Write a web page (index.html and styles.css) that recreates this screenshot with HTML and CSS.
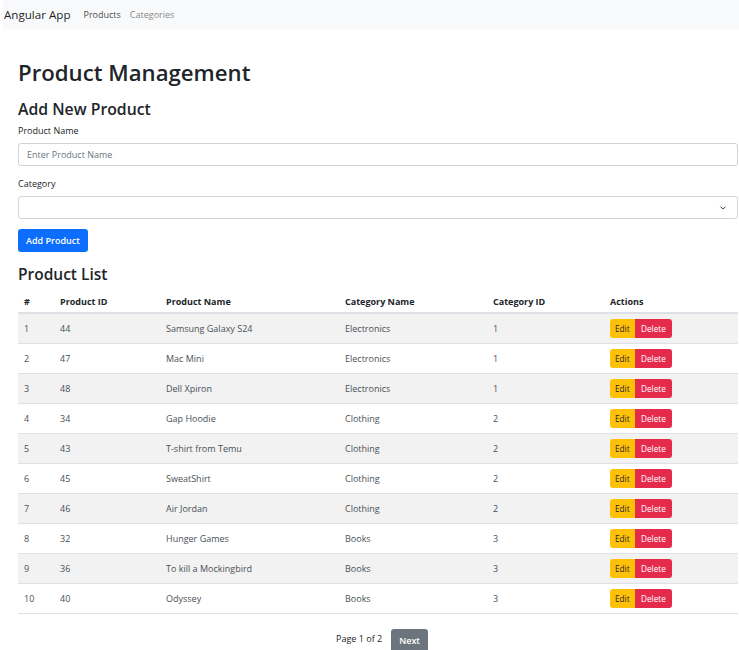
FILE: index.html
```html
<!DOCTYPE html>
<html lang="en">
<head>
<meta charset="utf-8">
<title>Angular App</title>
<link rel="stylesheet" href="styles.css">
</head>
<body>
<nav class="navbar">
  <span class="brand">Angular App</span>
  <a class="nav-link active">Products</a>
  <a class="nav-link">Categories</a>
</nav>
<main class="container">
  <h1 class="title">Product Management</h1>
  <h2 class="subtitle">Add New Product</h2>
  <form class="form">
    <label class="label">Product Name</label>
    <input class="control" type="text" placeholder="Enter Product Name">
    <label class="label label-gap">Category</label>
    <div class="select">
      <span class="chev"><svg width="8" height="6" viewBox="0 0 16 16"><path d="M2 5l6 6 6-6" fill="none" stroke="#343a40" stroke-width="2.5" stroke-linecap="round" stroke-linejoin="round"/></svg></span>
    </div>
    <button type="button" class="btn btn-primary">Add Product</button>
  </form>
  <h3 class="list-title">Product List</h3>
  <table class="table">
    <thead>
      <tr><th>#</th><th>Product ID</th><th>Product Name</th><th>Category Name</th><th>Category ID</th><th>Actions</th></tr>
    </thead>
    <tbody>
      <tr><td>1</td><td>44</td><td>Samsung Galaxy S24</td><td>Electronics</td><td>1</td><td><span class="acts"><button class="btn-sm edit">Edit</button><button class="btn-sm del">Delete</button></span></td></tr>
      <tr><td>2</td><td>47</td><td>Mac Mini</td><td>Electronics</td><td>1</td><td><span class="acts"><button class="btn-sm edit">Edit</button><button class="btn-sm del">Delete</button></span></td></tr>
      <tr><td>3</td><td>48</td><td>Dell Xpiron</td><td>Electronics</td><td>1</td><td><span class="acts"><button class="btn-sm edit">Edit</button><button class="btn-sm del">Delete</button></span></td></tr>
      <tr><td>4</td><td>34</td><td>Gap Hoodie</td><td>Clothing</td><td>2</td><td><span class="acts"><button class="btn-sm edit">Edit</button><button class="btn-sm del">Delete</button></span></td></tr>
      <tr><td>5</td><td>43</td><td>T-shirt from Temu</td><td>Clothing</td><td>2</td><td><span class="acts"><button class="btn-sm edit">Edit</button><button class="btn-sm del">Delete</button></span></td></tr>
      <tr><td>6</td><td>45</td><td>SweatShirt</td><td>Clothing</td><td>2</td><td><span class="acts"><button class="btn-sm edit">Edit</button><button class="btn-sm del">Delete</button></span></td></tr>
      <tr><td>7</td><td>46</td><td>Air Jordan</td><td>Clothing</td><td>2</td><td><span class="acts"><button class="btn-sm edit">Edit</button><button class="btn-sm del">Delete</button></span></td></tr>
      <tr><td>8</td><td>32</td><td>Hunger Games</td><td>Books</td><td>3</td><td><span class="acts"><button class="btn-sm edit">Edit</button><button class="btn-sm del">Delete</button></span></td></tr>
      <tr><td>9</td><td>36</td><td>To kill a Mockingbird</td><td>Books</td><td>3</td><td><span class="acts"><button class="btn-sm edit">Edit</button><button class="btn-sm del">Delete</button></span></td></tr>
      <tr><td>10</td><td>40</td><td>Odyssey</td><td>Books</td><td>3</td><td><span class="acts"><button class="btn-sm edit">Edit</button><button class="btn-sm del">Delete</button></span></td></tr>
    </tbody>
  </table>
  <div class="pager">
    <span class="page-info">Page 1 of 2</span>
    <button class="btn btn-secondary">Next</button>
  </div>
</main>
</body>
</html>
```
FILE: styles.css
```css
* { box-sizing: border-box; }
html, body { margin: 0; padding: 0; }
body {
  font-family: "Open Sans", "Noto Sans", sans-serif;
  font-size: 9.6px;
  color: #212529;
  background: #fff;
  overflow: hidden;
}
.navbar {
  margin-left: 3px;
  height: 29px;
  background: #f8f9fa;
  display: flex;
  align-items: center;
  padding-left: 1px;
}
.brand {
  font-size: 11.6px;
  color: rgba(0,0,0,.9);
  margin-right: 13px;
}
.nav-link {
  font-size: 9px;
  color: rgba(0,0,0,.5);
  margin-right: 9px;
}
.nav-link.active { color: rgba(0,0,0,.75); }
.container {
  padding: 0 1px 0 18px;
}
.title {
  font-size: 22.2px;
  font-weight: 600;
  margin: 29px 0 0;
  line-height: 29px;
}
.subtitle {
  font-size: 15.8px;
  font-weight: 600;
  margin: 12px 0 0;
  line-height: 21px;
}
.form { display: flex; flex-direction: column; align-items: flex-start; }
.label {
  margin-top: 4px;
  font-size: 9px;
  color: #212529;
  line-height: 14px;
}
.label-gap { margin-top: 11px; }
.control, .select {
  width: 100%;
  height: 23px;
  margin-top: 5px;
  border: 1px solid #ced4da;
  border-radius: 3px;
  font: inherit;
  font-size: 9px;
  padding: 0 8px;
  color: #212529;
  background: #fff;
}
.control::placeholder { color: #6c757d; }
.select { display: flex; align-items: center; justify-content: flex-end; }
.chev { display: flex; margin-right: 2px; }
.btn {
  font: inherit;
  font-size: 9px;
  font-weight: 600;
  border: 0;
  border-radius: 3px;
  color: #fff;
  padding: 0 8px;
  height: 23px;
  white-space: nowrap;
}
.btn-primary { background: #0d6efd; margin-top: 10px; padding: 0 8px; }
.btn-secondary { background: #6c757d; }
.list-title {
  font-size: 15.5px;
  font-weight: 600;
  margin: 13px 0 0;
  line-height: 19px;
}
.table {
  width: 100%;
  border-collapse: collapse;
  margin-top: 7px;
  font-size: 9px;
}
.table th {
  text-align: left;
  font-weight: 700;
  height: 22px;
  padding: 0 6px;
  border-bottom: 2px solid #dee2e6;
  color: #212529;
}
.table td {
  height: 30px;
  padding: 0 6px;
  border-bottom: 1px solid #dee2e6;
  color: #495057;
}
.table tbody tr:nth-child(odd) td { background: #f2f2f2; }
.table th:nth-child(1) { width: 36px; }
.table th:nth-child(2) { width: 106px; }
.table th:nth-child(3) { width: 179px; }
.table th:nth-child(4) { width: 148px; }
.table th:nth-child(5) { width: 117px; }
.acts { display: inline-flex; }
.btn-sm {
  font: inherit;
  font-size: 8.2px;
  border: 0;
  height: 19px;
  padding: 0 5px;
}
.edit { background: #ffc107; color: #212529; border-radius: 3px 0 0 3px; }
.del { background: #e52b4c; color: #fff; border-radius: 0 3px 3px 0; padding: 0 6.5px; }
.pager {
  display: flex;
  justify-content: center;
  align-items: flex-start;
  gap: 9px;
  margin-top: 15px;
  padding-left: 8px;
}
.page-info { font-size: 9px; color: #212529; padding-top: 3px; }
.pager .btn { height: 24px; padding: 0 8px; }
```
